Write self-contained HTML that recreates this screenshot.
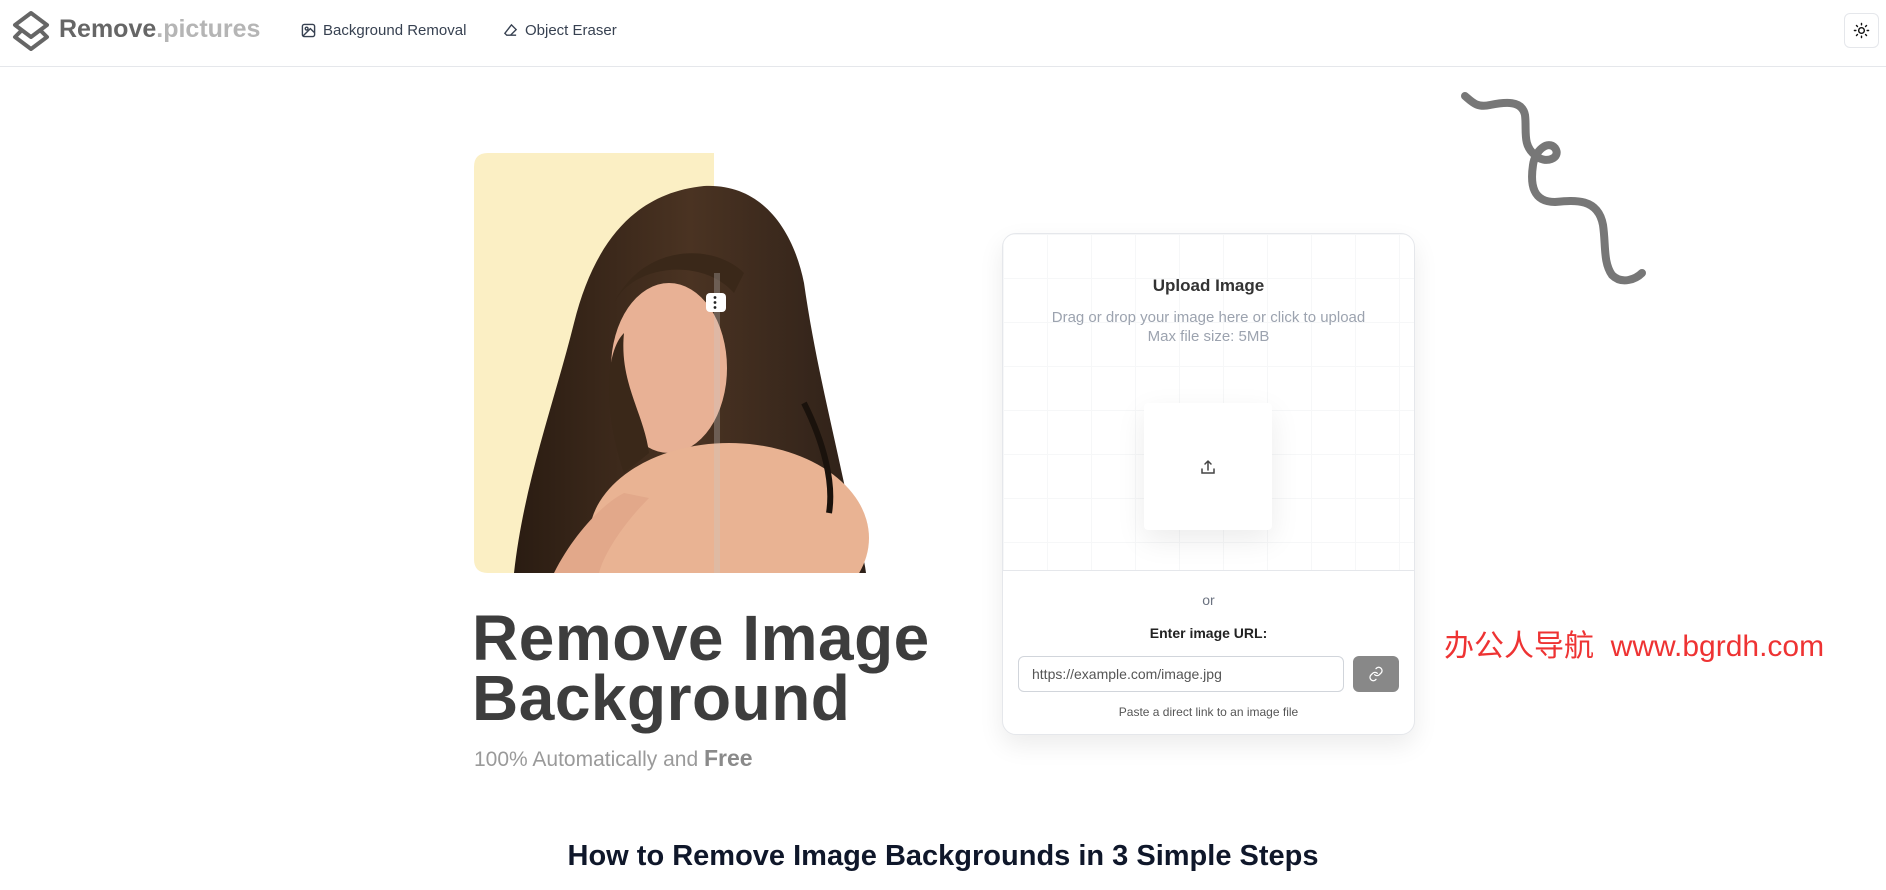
<!DOCTYPE html>
<html><head><meta charset="utf-8"><style>
*{margin:0;padding:0;box-sizing:border-box}
body{width:1886px;height:890px;background:#fff;font-family:"Liberation Sans",sans-serif;position:relative;overflow:hidden}
.abs{position:absolute}
.nav{left:0;top:0;width:1886px;height:67px;border-bottom:1px solid #e5e7eb}
.navi{font-size:15px;color:#374151;top:22px;display:flex;align-items:center;gap:7px}
.card{left:1002px;top:233px;width:413px;height:502px;border:1px solid #e5e7eb;border-radius:14px;box-shadow:0 10px 25px rgba(0,0,0,.08);overflow:hidden;background:#fff}
.c{width:100%;text-align:center;left:0}
</style></head><body>
<div class="abs nav"></div>
<svg class="abs" style="left:10px;top:10px" width="42" height="42" viewBox="0 0 42 42" fill="none" stroke="#666" stroke-width="4" stroke-linejoin="round"><path d="M21 3 L37 15 L21 27 L5 15 Z"/><path d="M11 21 L5 27 L21 39 L37 27 L31 21"/></svg>
<div class="abs" style="left:59px;top:15px;font-size:25px;font-weight:bold;color:#666">Remove<span style="color:#b5b5b5">.pictures</span></div>
<div class="abs navi" style="left:301px"><svg width="15" height="15" viewBox="0 0 16 16" fill="none" stroke="#374151" stroke-width="1.5"><rect x="1.5" y="1.5" width="13" height="13" rx="2"/><circle cx="6" cy="6" r="1.5"/><path d="M14 10l-4-4-8 8"/></svg>Background Removal</div>
<div class="abs navi" style="left:503px"><svg width="15" height="15" viewBox="0 0 16 16" fill="none" stroke="#374151" stroke-width="1.5"><path d="M9 2l5 5-6 6H4l-2-2z M4 13h10"/></svg>Object Eraser</div>
<div class="abs" style="left:1844px;top:13px;width:35px;height:35px;border:1px solid #e5e7eb;border-radius:6px;display:flex;align-items:center;justify-content:center"><svg width="17" height="17" viewBox="0 0 24 24" fill="none" stroke="#111" stroke-width="2" stroke-linecap="round"><circle cx="12" cy="12" r="4"/><path d="M12 2v2M12 20v2M4.9 4.9l1.4 1.4M17.7 17.7l1.4 1.4M2 12h2M20 12h2M4.9 19.1l1.4-1.4M17.7 6.3l1.4-1.4"/></svg></div>

<svg class="abs" style="left:0;top:0" width="1886" height="890"><path d="M1465 96 C1472 102 1477 108 1490 105 C1505 102 1522 100 1525 115 C1527 130 1522 145 1535 155 C1545 165 1562 158 1555 148 C1548 140 1535 150 1533 165 C1530 185 1533 202 1555 202 C1575 200 1598 198 1603 225 C1606 245 1603 262 1612 275 C1622 285 1636 279 1642 273" fill="none" stroke="#777" stroke-width="8" stroke-linecap="round"/></svg>

<svg class="abs" style="left:474px;top:153px" width="400" height="420" viewBox="0 0 400 420">
<defs><clipPath id="cp"><path d="M14 0 H240 V0 H400 V420 H14 Q0 420 0 406 V14 Q0 0 14 0Z"/></clipPath>
<linearGradient id="hg" x1="0" x2="1"><stop offset="0" stop-color="#2a1c12"/><stop offset=".5" stop-color="#4a3322"/><stop offset="1" stop-color="#2d2018"/></linearGradient></defs>
<g clip-path="url(#cp)">
<rect x="0" y="0" width="240" height="420" fill="#fbefc4"/>
<path d="M40 420 C50 330 80 250 100 170 C120 90 160 40 230 33 C290 30 320 80 330 130 C340 200 355 260 370 330 C380 380 390 400 392 420Z" fill="url(#hg)"/>
<ellipse cx="195" cy="215" rx="58" ry="85" fill="#e8b195"/>
<path d="M140 150 C160 110 230 105 260 140 L270 120 C240 90 170 90 140 150Z" fill="#3a2819"/>
<path d="M150 180 C145 230 170 260 175 300 L150 320 C130 260 130 200 150 180Z" fill="#3a2819"/>
<ellipse cx="255" cy="385" rx="140" ry="95" fill="#e9b393"/>
<path d="M80 420 C100 380 130 350 150 340 L175 345 C150 370 130 400 125 420Z" fill="#e2a88a"/>
<path d="M330 250 C350 290 360 330 355 360" stroke="#1a120c" stroke-width="6" fill="none"/>
<rect x="240" y="120" width="6" height="300" fill="#c9c9c9" opacity=".3"/>
</g>
<rect x="232" y="140" width="20" height="19" rx="4" fill="#fff"/>
<circle cx="241" cy="144.5" r="1.4" fill="#222"/><circle cx="241" cy="149.5" r="1.4" fill="#222"/><circle cx="241" cy="154.5" r="1.4" fill="#222"/>
</svg>

<div class="abs" style="left:472px;top:608px;font-size:64px;font-weight:bold;color:#3d3d3d;line-height:60px;letter-spacing:0.5px">Remove Image<br>Background</div>
<div class="abs" style="left:474px;top:745px;font-size:21px;color:#9a9a9a">100% Automatically and <b style="color:#8a8a8a;font-size:23px">Free</b></div>

<div class="abs card">
<div class="abs" style="left:0;top:0;width:413px;height:337px;background-image:linear-gradient(#f3f4f6 1px,transparent 1px),linear-gradient(90deg,#f3f4f6 1px,transparent 1px);background-size:44px 44px;opacity:.7"></div>
<div class="abs c" style="top:42px;font-size:17px;font-weight:bold;color:#333">Upload Image</div>
<div class="abs c" style="top:74px;font-size:15px;color:#9ca3af;line-height:19px">Drag or drop your image here or click to upload<br>Max file size: 5MB</div>
<div class="abs" style="left:141px;top:169px;width:128px;height:127px;background:#fff;border-radius:4px;box-shadow:0 10px 30px rgba(0,0,0,.08);display:flex;align-items:center;justify-content:center"><svg width="16" height="16" viewBox="0 0 16 16" fill="none" stroke="#444" stroke-width="1.5" stroke-linecap="round"><path d="M8 11V2M5 5l3-3 3 3M2 10v4h12v-4"/></svg></div>
<div class="abs" style="left:0;top:336px;width:413px;height:1px;background:#e5e7eb"></div>
<div class="abs c" style="top:358px;font-size:14px;color:#6b7280">or</div>
<div class="abs c" style="top:391px;font-size:14px;font-weight:bold;color:#222">Enter image URL:</div>
<div class="abs" style="left:15px;top:422px;width:326px;height:36px;border:1px solid #d1d5db;border-radius:6px;font-size:14px;color:#555;padding:9px 13px">https://example.com/image.jpg</div>
<div class="abs" style="left:350px;top:422px;width:46px;height:36px;background:#888;border-radius:6px;display:flex;align-items:center;justify-content:center"><svg width="16" height="16" viewBox="0 0 24 24" fill="none" stroke="#fff" stroke-width="2" stroke-linecap="round"><path d="M10 13a5 5 0 007 0l3-3a5 5 0 00-7-7l-1 1M14 11a5 5 0 00-7 0l-3 3a5 5 0 007 7l1-1"/></svg></div>
<div class="abs c" style="top:471px;font-size:12px;color:#555">Paste a direct link to an image file</div>
</div>

<div class="abs" style="left:1444px;top:621px;font-size:30px;color:#ee3333;font-family:'Liberation Sans','Noto Sans CJK SC',sans-serif;white-space:nowrap">办公人导航&nbsp; www.bgrdh.com</div>
<div class="abs" style="left:0;width:1886px;text-align:center;top:840px;font-size:29px;font-weight:bold;color:#0f172a">How to Remove Image Backgrounds in 3 Simple Steps</div>
</body></html>
